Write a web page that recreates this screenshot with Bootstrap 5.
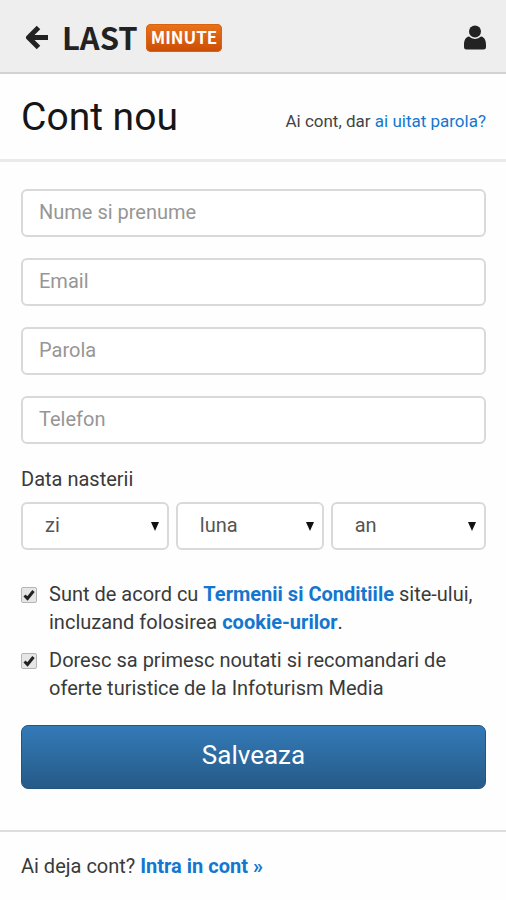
<!DOCTYPE html>
<html lang="ro">
<head>
<meta charset="utf-8">
<meta name="viewport" content="width=device-width, initial-scale=1">
<title>Cont nou - Last Minute</title>
<link href="https://cdn.jsdelivr.net/npm/bootstrap@5.3.0/dist/css/bootstrap.min.css" rel="stylesheet">
<style>
  body { font-family: Roboto, "Liberation Sans", sans-serif; font-size: 20px; line-height: 28px; color: #3a3a3a; background: #fefefe; }
  a { color: #1477cf; text-decoration: none; }
  .gutter { padding-left: 21px; padding-right: 20px; }
  .topbar { min-height: 74px; padding-top: 3px; background: #eee; border-bottom: 2px solid #d2d2d2; }
  .icon-button { border: 0; background: none; padding: 0; color: #222; line-height: 0; }
  .back { gap: 14px; }
  .brand { gap: 8px; font-family: "Noto Sans CJK JP", "Liberation Sans", sans-serif; font-weight: 700; }
  .brand-name { font-size: 31px; line-height: 26px; padding-bottom: 2px; color: #222; }
  .brand-tag { font-size: 17px; line-height: 26px; padding: 0 5px 2px; border-radius: 5px; color: #fff; background: linear-gradient(#e8741c, #cc4c04); box-shadow: inset 0 0 0 1px #d8640f; }
  .titlebar { min-height: 88px; border-bottom: 3px solid #eaeaea; }
  .page-title { font-size: 39px; line-height: 44px; font-weight: 400; color: #161616; }
  .hint { font-size: 17px; line-height: 24px; color: #444; }
  .signup { padding-top: 27px; padding-bottom: 41px; }
  .fields { gap: 21px; }
  .field { height: 48px; padding: 0 16px 2px; font-size: 20px; color: #555; background-color: #fff; border: 2px solid #d9d9d9; border-radius: 6px; }
  .field::placeholder { color: #969696; }
  .birth-label { margin: 21px 0 9px; }
  .birth { display: grid; grid-template-columns: 20fr 20fr 21fr; gap: 7px; }
  .picker { padding-left: 22px; background-image: url("data:image/svg+xml,%3Csvg xmlns='http://www.w3.org/2000/svg' viewBox='0 0 8 9'%3E%3Cpath fill='%23111' d='M0 0h8L4 9z'/%3E%3C/svg%3E"); background-size: 8px 9px; background-position: right 8px center; }
  .terms { gap: 12px; }
  .consent { margin-top: 30px; gap: 10px; }
  .tick.form-check-input { flex: none; width: 16px; height: 16px; margin: 7px 0 0; border: 1px solid #b5b5b5; border-radius: 2px; background-color: #e6e6e6; }
  .tick:checked { background-size: 14px 14px; background-image: url("data:image/svg+xml,%3Csvg xmlns='http://www.w3.org/2000/svg' viewBox='0 0 14 14'%3E%3Cpath fill='none' stroke='%23222' stroke-width='3' d='M2.5 7.5 5.5 10.5 11.5 3'/%3E%3C/svg%3E"); }
  .save { margin-top: 23px; padding: 0 0 4px; height: 64px; font-size: 26px; line-height: 32px; color: #fff; border: 1px solid #245580; border-radius: 7px; background: linear-gradient(#337ab7, #265a88); }
  .save:hover { color: #fff; background: #265a88; }
  .login { border-top: 2px solid #ddd; padding-top: 20px; padding-bottom: 20px; }
</style>
<script src="https://cdn.jsdelivr.net/npm/bootstrap@5.3.0/dist/js/bootstrap.bundle.min.js"></script>
</head>
<body>
<header class="topbar gutter d-flex align-items-center justify-content-between">
  <div class="back d-flex align-items-center">
    <button type="button" class="icon-button ps-1" aria-label="Inapoi">
      <svg width="23" height="25" viewBox="0 0 23 25" fill="none" stroke="currentColor" stroke-width="5" stroke-linejoin="round"><path d="M13.500 2.500 3.500 12.500l10 10M4 12.500h19"/></svg>
    </button>
    <a href="#" class="brand d-flex align-items-center"><span class="brand-name">LAST</span><span class="brand-tag">MINUTE</span></a>
  </div>
  <button type="button" class="icon-button" aria-label="Contul meu">
    <svg width="22" height="25" viewBox="0 0 22 25" fill="currentColor"><circle cx="11" cy="6.500" r="6"/><path d="M5 11.500a8.500 8.500 0 0 0 12 0c3.500.5 5 4 5 8.500v2c0 1.700-1 2.500-2.500 2.500h-17C1 24.500 0 23.700 0 22v-2c0-4.500 1.500-8 5-8.500z"/></svg>
  </button>
</header>
<main>
  <div class="titlebar gutter d-flex align-items-center justify-content-between">
    <h1 class="page-title mb-0">Cont nou</h1>
    <p class="hint mb-0 pt-2">Ai cont, dar <a href="#">ai uitat parola?</a></p>
  </div>
  <form class="signup gutter">
    <div class="fields d-flex flex-column">
      <input class="form-control field" type="text" placeholder="Nume si prenume" aria-label="Nume si prenume">
      <input class="form-control field" type="email" placeholder="Email" aria-label="Email">
      <input class="form-control field" type="password" placeholder="Parola" aria-label="Parola">
      <input class="form-control field" type="tel" placeholder="Telefon" aria-label="Telefon">
    </div>
    <label for="day" class="birth-label d-block">Data nasterii</label>
    <div class="birth">
      <select id="day" class="form-select field picker"><option>zi</option></select>
      <select class="form-select field picker" aria-label="luna"><option>luna</option></select>
      <select class="form-select field picker" aria-label="an"><option>an</option></select>
    </div>
    <div class="consent d-flex flex-column">
      <div class="terms d-flex"><input class="form-check-input tick" type="checkbox" id="agree" checked><label for="agree">Sunt de acord cu <a href="#" class="fw-bold">Termenii si Conditiile</a> site-ului, incluzand folosirea <a href="#" class="fw-bold">cookie-urilor</a>.</label></div>
      <div class="terms d-flex"><input class="form-check-input tick" type="checkbox" id="news" checked><label for="news">Doresc sa primesc noutati si recomandari de oferte turistice de la Infoturism Media</label></div>
    </div>
    <button type="submit" class="btn save w-100">Salveaza</button>
  </form>
</main>
<footer class="login gutter">Ai deja cont? <a href="#" class="fw-bold">Intra in cont »</a></footer>
</body>
</html>
